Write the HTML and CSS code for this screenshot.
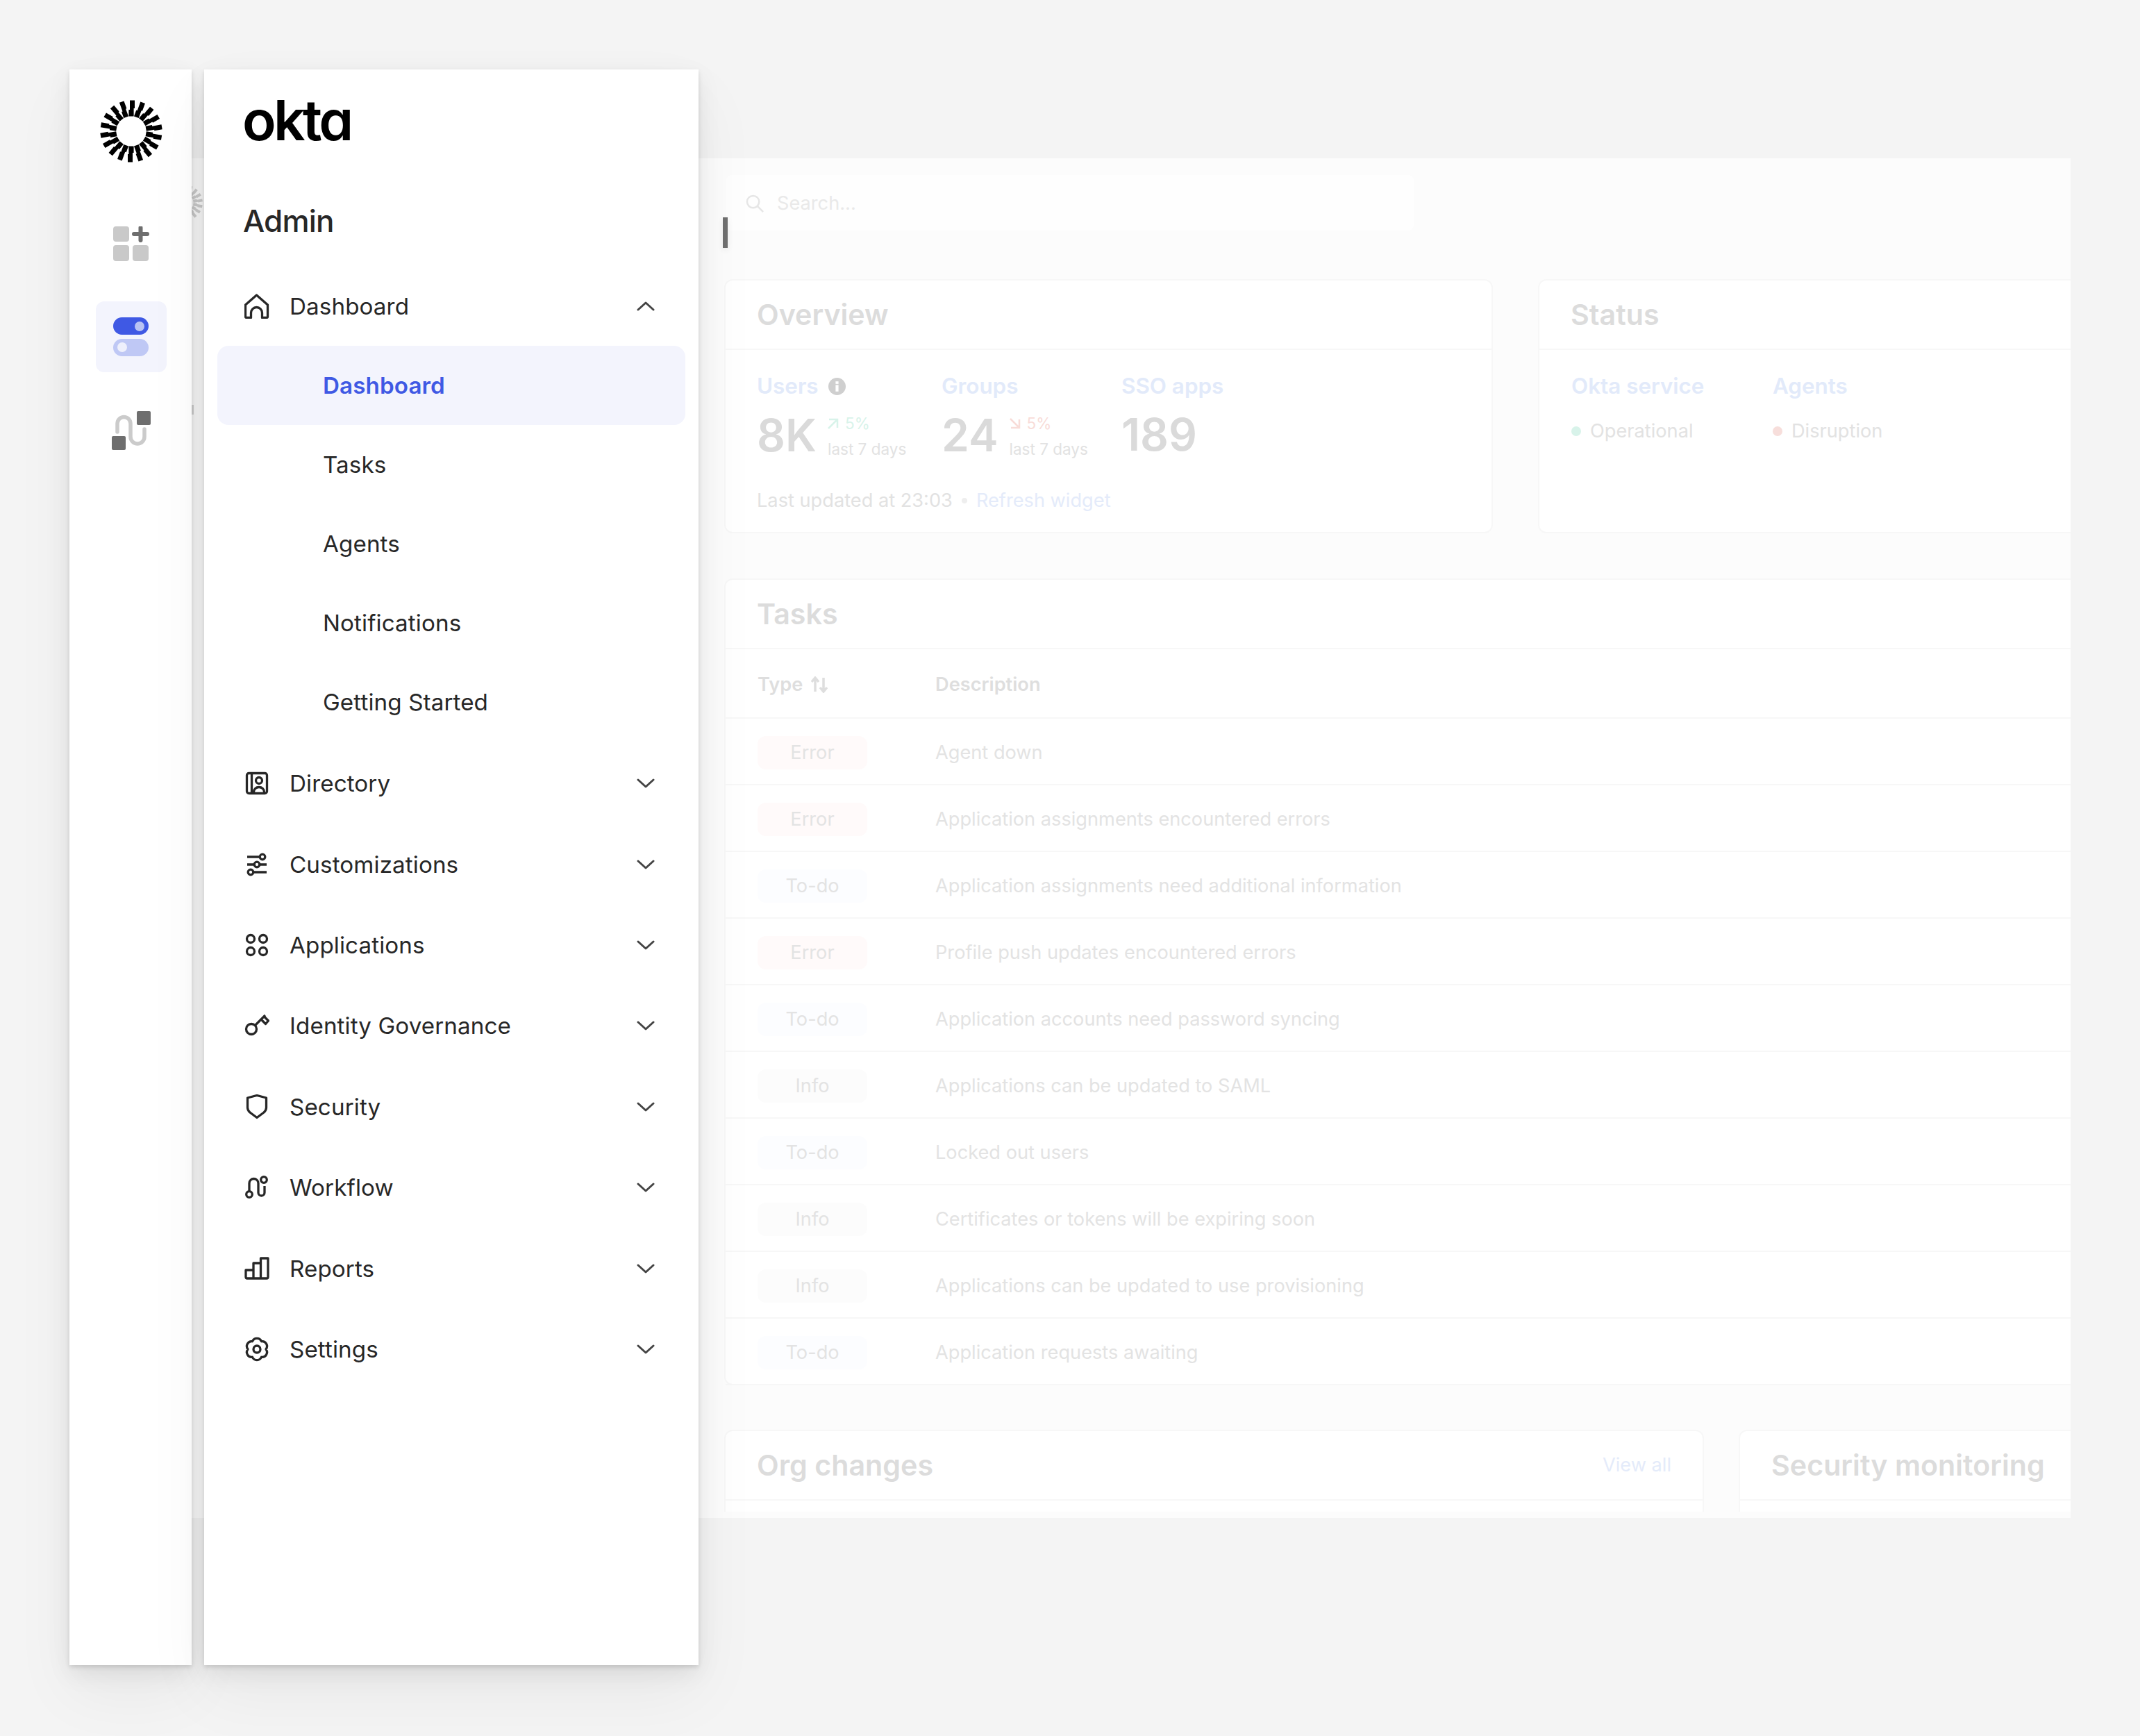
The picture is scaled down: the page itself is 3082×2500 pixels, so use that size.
FILE: index.html
```html
<!DOCTYPE html>
<html lang="en">
<head>
<meta charset="utf-8">
<title>Okta Admin</title>
<link rel="stylesheet" href="styles.css">
</head>
<body>
<svg class="defs" width="0" height="0" aria-hidden="true">
  <defs>
    <polygon id="ray" points="-2,-44.5 5,-44.5 5,-33 3.6,-33 3.6,-21.5 -3.6,-21.5 -3.6,-31 -2,-31"/>
    <g id="sun">
      <use href="#ray" transform="rotate(0)"/><use href="#ray" transform="rotate(20)"/><use href="#ray" transform="rotate(40)"/>
      <use href="#ray" transform="rotate(60)"/><use href="#ray" transform="rotate(80)"/><use href="#ray" transform="rotate(100)"/>
      <use href="#ray" transform="rotate(120)"/><use href="#ray" transform="rotate(140)"/><use href="#ray" transform="rotate(160)"/>
      <use href="#ray" transform="rotate(180)"/><use href="#ray" transform="rotate(200)"/><use href="#ray" transform="rotate(220)"/>
      <use href="#ray" transform="rotate(240)"/><use href="#ray" transform="rotate(260)"/><use href="#ray" transform="rotate(280)"/>
      <use href="#ray" transform="rotate(300)"/><use href="#ray" transform="rotate(320)"/><use href="#ray" transform="rotate(340)"/>
    </g>
  </defs>
</svg>

<div class="stage">
  <div class="window">
    <svg class="ghost-logo" viewBox="-50 -50 100 100"><use href="#sun"/></svg>
    <span class="ghost-tick"></span>
    <span class="ghost-bar"></span>
    <main class="content">
      <div class="search">
        <svg class="search-icon" viewBox="0 0 28 28"><circle cx="11" cy="11" r="9"/><path d="M17.5 17.5 26 26"/></svg>
        <span>Search...</span>
      </div>

      <div class="row row-top">
        <section class="card card-overview">
          <h2 class="card-head">Overview</h2>
          <div class="stats">
            <div class="stat">
              <div class="label">Users <svg class="info" viewBox="0 0 24 24"><circle cx="12" cy="12" r="12" fill="#cfcfcf"/><rect x="10" y="10" width="4" height="9" fill="#fff"/><rect x="10" y="5" width="4" height="3.5" fill="#fff"/></svg></div>
              <div class="value-row">
                <span class="value">8K</span>
                <div class="delta">
                  <span class="delta-up"><svg viewBox="0 0 16 16"><path d="M2 2h12v12M14 2 1 15"/></svg>5%</span>
                  <span class="delta-note">last 7 days</span>
                </div>
              </div>
            </div>
            <div class="stat">
              <div class="label">Groups</div>
              <div class="value-row">
                <span class="value">24</span>
                <div class="delta">
                  <span class="delta-down"><svg viewBox="0 0 16 16"><path d="M14 2v12H2M14 14 1 1"/></svg>5%</span>
                  <span class="delta-note">last 7 days</span>
                </div>
              </div>
            </div>
            <div class="stat">
              <div class="label">SSO apps</div>
              <div class="value-row"><span class="value value-plain">189</span></div>
            </div>
          </div>
          <p class="updated">Last updated at 23:03<i class="sep"></i><span class="link">Refresh widget</span></p>
        </section>

        <section class="card card-status">
          <h2 class="card-head">Status</h2>
          <div class="status-grid">
            <div>
              <div class="label">Okta service</div>
              <div class="state"><i class="dot dot-ok"></i>Operational</div>
            </div>
            <div>
              <div class="label">Agents</div>
              <div class="state"><i class="dot dot-bad"></i>Disruption</div>
            </div>
          </div>
        </section>
      </div>

      <section class="card card-tasks">
        <h2 class="card-head">Tasks</h2>
        <div class="tr th">
          <div class="col-type">Type <svg class="sort" viewBox="0 0 24 24"><path d="M6 22V4M1 8l5-6 5 6M18 2v18M13 16l5 6 5-6"/></svg></div>
          <div>Description</div>
        </div>
        <div class="tr"><div class="col-type"><span class="badge badge-error">Error</span></div><div>Agent down</div></div>
        <div class="tr"><div class="col-type"><span class="badge badge-error">Error</span></div><div>Application assignments encountered errors</div></div>
        <div class="tr"><div class="col-type"><span class="badge badge-todo">To-do</span></div><div>Application assignments need additional information</div></div>
        <div class="tr"><div class="col-type"><span class="badge badge-error">Error</span></div><div>Profile push updates encountered errors</div></div>
        <div class="tr"><div class="col-type"><span class="badge badge-todo">To-do</span></div><div>Application accounts need password syncing</div></div>
        <div class="tr"><div class="col-type"><span class="badge badge-info">Info</span></div><div>Applications can be updated to SAML</div></div>
        <div class="tr"><div class="col-type"><span class="badge badge-todo">To-do</span></div><div>Locked out users</div></div>
        <div class="tr"><div class="col-type"><span class="badge badge-info">Info</span></div><div>Certificates or tokens will be expiring soon</div></div>
        <div class="tr"><div class="col-type"><span class="badge badge-info">Info</span></div><div>Applications can be updated to use provisioning</div></div>
        <div class="tr"><div class="col-type"><span class="badge badge-todo">To-do</span></div><div>Application requests awaiting</div></div>
      </section>

      <div class="row row-bottom">
        <section class="card card-org">
          <div class="card-head card-head-split"><h2>Org changes</h2><span class="link">View all</span></div>
        </section>
        <section class="card card-security">
          <div class="card-head"><h2>Security monitoring</h2></div>
        </section>
      </div>
    </main>
  </div>

  <aside class="rail">
    <svg class="rail-logo" viewBox="-45 -45 90 90"><use href="#sun"/></svg>
    <svg class="rail-grid" viewBox="0 0 52 50">
      <rect width="23" height="22" rx="4" fill="#c9c9c9"/>
      <rect y="27" width="23" height="23" rx="4" fill="#c9c9c9"/>
      <rect x="28" y="27" width="23" height="23" rx="4" fill="#c9c9c9"/>
      <path d="M39.5 2v18M30 11h19" fill="none" stroke="#6e6e6e" stroke-width="6" stroke-linecap="round"/>
    </svg>
    <div class="rail-tile">
      <svg viewBox="0 0 51 56" width="51" height="56">
        <rect width="51" height="25" rx="12.5" fill="#3f59e4"/>
        <circle cx="38" cy="13" r="7" fill="#b9c3f3"/>
        <rect y="31" width="51" height="25" rx="12.5" fill="#bfc8f5"/>
        <circle cx="13" cy="43" r="7" fill="#eef0fc"/>
      </svg>
    </div>
    <svg class="rail-flow" viewBox="0 0 56 56">
      <path d="M8 30V18a9.5 9.5 0 0 1 19 0v19a10 10 0 0 0 20 0V26" fill="none" stroke="#cbcbcb" stroke-width="5.5" stroke-linecap="round"/>
      <rect x="36" width="20" height="20" rx="2" fill="#6e6e6e"/>
      <rect y="36" width="20" height="20" rx="2" fill="#6e6e6e"/>
    </svg>
  </aside>

  <aside class="panel">
    <div class="wordmark">okta</div>
    <div class="panel-title">Admin</div>
    <nav class="nav">
      <a class="nav-item nav-head">
        <svg class="nav-icon" viewBox="0 0 36 36"><path d="M9.5 34.5H3A1.5 1.5 0 0 1 1.5 33V16L17.5 2l16 14v17a1.5 1.5 0 0 1-1.5 1.5h-6.5v-7a8 8 0 0 0-16 0z"/></svg>
        <span>Dashboard</span>
        <svg class="chev" viewBox="0 0 26 14"><path d="M2 12 13 2l11 10"/></svg>
      </a>
      <a class="nav-sub nav-sub-active">Dashboard</a>
      <a class="nav-sub">Tasks</a>
      <a class="nav-sub">Agents</a>
      <a class="nav-sub">Notifications</a>
      <a class="nav-sub nav-sub-last">Getting Started</a>

      <a class="nav-item">
        <svg class="nav-icon" viewBox="0 0 36 36"><rect x="3.5" y="3.5" width="29" height="29" rx="3"/><path d="M10.5 3.5v29M13.5 32.5v-2a7.5 7 0 0 1 15 0v2"/><circle cx="21" cy="14" r="4.5"/></svg>
        <span>Directory</span>
        <svg class="chev" viewBox="0 0 26 14"><path d="M2 2l11 10L24 2"/></svg>
      </a>
      <a class="nav-item">
        <svg class="nav-icon" viewBox="0 0 36 36"><path d="M4 7h19M4 18h10M22 18h10M14 29h18"/><circle cx="26" cy="7" r="3.8"/><circle cx="18" cy="18" r="3.8"/><circle cx="9" cy="29" r="3.8"/></svg>
        <span>Customizations</span>
        <svg class="chev" viewBox="0 0 26 14"><path d="M2 2l11 10L24 2"/></svg>
      </a>
      <a class="nav-item">
        <svg class="nav-icon" viewBox="0 0 36 36"><circle cx="9" cy="9" r="5.5"/><circle cx="27" cy="9" r="5.5"/><circle cx="9" cy="27" r="5.5"/><circle cx="27" cy="27" r="5.5"/></svg>
        <span>Applications</span>
        <svg class="chev" viewBox="0 0 26 14"><path d="M2 2l11 10L24 2"/></svg>
      </a>
      <a class="nav-item">
        <svg class="nav-icon" viewBox="0 0 36 36"><circle cx="10" cy="23" r="7.5"/><path d="M15.5 17.5 30 3M24 9l6.500 6.500 4-4.500-6-6"/></svg>
        <span>Identity Governance</span>
        <svg class="chev" viewBox="0 0 26 14"><path d="M2 2l11 10L24 2"/></svg>
      </a>
      <a class="nav-item">
        <svg class="nav-icon" viewBox="0 0 36 36"><path d="M18 1.500 31.500 5v14q0 4-3.500 7L18 33.500 8 26q-3.500-3-3.500-7V5z"/></svg>
        <span>Security</span>
        <svg class="chev" viewBox="0 0 26 14"><path d="M2 2l11 10L24 2"/></svg>
      </a>
      <a class="nav-item">
        <svg class="nav-icon" viewBox="0 0 36 36"><path d="M7 23V12a6.500 6.500 0 0 1 13 0v13.500a4.500 4.500 0 0 0 9 0V16"/><circle cx="28" cy="7" r="4.300"/><circle cx="7" cy="28" r="4.300"/></svg>
        <span>Workflow</span>
        <svg class="chev" viewBox="0 0 26 14"><path d="M2 2l11 10L24 2"/></svg>
      </a>
      <a class="nav-item">
        <svg class="nav-icon" viewBox="0 0 36 36"><path d="M13 32H4a2 2 0 0 1-2-2V20h11V10h10.500V3H34v27a2 2 0 0 1-2 2zM13 20v12M23.500 10v22"/></svg>
        <span>Reports</span>
        <svg class="chev" viewBox="0 0 26 14"><path d="M2 2l11 10L24 2"/></svg>
      </a>
      <a class="nav-item">
        <svg class="nav-icon" viewBox="0 0 36 36"><path d="M11.500 6.740A7 7 0 0 1 24.500 6.740 7 7 0 0 1 31 18 7 7 0 0 1 24.500 29.260 7 7 0 0 1 11.500 29.260 7 7 0 0 1 5 18 7 7 0 0 1 11.500 6.740z"/><circle cx="18" cy="18" r="5"/></svg>
        <span>Settings</span>
        <svg class="chev" viewBox="0 0 26 14"><path d="M2 2l11 10L24 2"/></svg>
      </a>
    </nav>
  </aside>
</div>
</body>
</html>
```

FILE: styles.css
```css
* { box-sizing: border-box; }
html, body { margin: 0; padding: 0; }
body {
  width: 3082px;
  height: 2500px;
  overflow: hidden;
  background: #f4f4f4;
  font-family: "Inter", "Liberation Sans", sans-serif;
  color: #272727;
}
h2, p { margin: 0; font: inherit; }
.defs { position: absolute; }

.stage { position: relative; width: 3082px; height: 2500px; padding: 228px 0 0 100px; }

/* Faded app window behind the panels */
.window {
  position: relative;
  width: 2882px;
  height: 1958px;
  padding-left: 943px;
  background: #fcfcfc;
}
.ghost-logo { position: absolute; left: 137px; top: 35px; width: 58px; height: 58px; fill: #cfcfcf; }
.ghost-tick { position: absolute; left: 176px; top: 355px; width: 3px; height: 14px; background: #d6d6d6; }
.ghost-bar {
  position: absolute;
  left: 941px;
  top: 85px;
  width: 7px;
  height: 44px;
  background: #6e6e6e;
  box-shadow: 0 3px 8px rgba(0,0,0,.08);
  z-index: 2;
}
.content {
  height: 1949px;
  overflow: hidden;
  padding-top: 24px;
  font-size: 27.200px;
  line-height: 40px;
  color: #e3e3e3;
}
.search {
  display: flex;
  align-items: center;
  gap: 18px;
  width: 990px;
  height: 80px;
  margin-left: 3px;
  padding: 2px 0 0 28px;
  background: #fefefe;
  border-radius: 8px;
  color: #e9e9e9;
}
.search-icon { width: 27px; height: 27px; fill: none; stroke: #e6e6e6; stroke-width: 2.600; }

.row { display: flex; width: 2600px; }
.row-top { gap: 65px; margin-top: 70px; }
.row-bottom { gap: 50px; margin-top: 64px; }

.card {
  flex: none;
  background: #fff;
  border: 2px solid #f7f7f7;
  border-radius: 12px;
}
.card-overview, .card-status { width: 1107px; height: 366px; }
.card-tasks { width: 2400px; height: 1162px; margin-top: 65px; }
.card-org { width: 1411px; height: 200px; }
.card-security { width: 1000px; height: 200px; }

.card-head {
  height: 100px;
  padding: 0 45px;
  display: flex;
  align-items: center;
  border-bottom: 2px solid #f7f7f7;
  font-size: 41.200px;
  font-weight: 600;
  color: #dcdcdc;
}
.card-head-split { justify-content: space-between; }
.link { color: #e4ebfa; font-size: 27.200px; font-weight: 400; }

.label { display: flex; align-items: center; gap: 14px; font-size: 31.400px; font-weight: 600; color: #e2eafa; }
.info { width: 25px; height: 25px; }

.stats { display: grid; grid-template-columns: 266px 259px auto; padding: 32px 45px 0; }
.value-row { display: flex; align-items: center; gap: 16px; height: 72px; margin-top: 15px; }
.value { font-size: 64px; line-height: 72px; font-weight: 600; color: #dadada; }
.value-plain { position: relative; top: -1px; }
.delta { display: flex; flex-direction: column; font-size: 22.500px; line-height: 37px; margin-top: 2px; }
.delta-up, .delta-down { display: flex; align-items: center; gap: 9px; }
.delta-up { color: #d8f3ea; }
.delta-down { color: #f8dcd8; }
.delta svg { width: 16px; height: 16px; fill: none; stroke: currentColor; stroke-width: 2.500; }
.delta-note { color: #e2e2e2; }
.updated { display: flex; align-items: center; padding: 0 45px; margin-top: 38px; color: #e2e2e2; }
.sep { width: 8px; height: 8px; margin: 0 13px; border-radius: 50%; background: #eee; }

.status-grid { display: grid; grid-template-columns: 290px 290px; padding: 32px 46px 0; }
.state { display: flex; align-items: center; gap: 13px; margin-top: 25px; color: #e2e2e2; }
.dot { width: 14px; height: 14px; border-radius: 50%; }
.dot-ok { background: #d8f3ea; }
.dot-bad { background: #f7dedb; }

.tr {
  display: flex;
  align-items: center;
  height: 96px;
  padding: 4px 0 0 46px;
  border-bottom: 2px solid #f7f7f7;
  color: #e3e3e3;
}
.th { height: 100px; padding-top: 3px; font-weight: 600; color: #dedede; }
.col-type { flex: none; width: 256px; display: flex; align-items: center; gap: 12px; }
.sort { width: 24px; height: 24px; fill: none; stroke: #dedede; stroke-width: 3.500; }
.badge { width: 158px; height: 48px; display: flex; align-items: center; justify-content: center; border-radius: 12px; }
.badge-error { background: #fffafa; }
.badge-todo { background: #fcfdff; }
.badge-info { background: #fcfcfc; }

/* Foreground panels */
.rail, .panel {
  position: absolute;
  top: 100px;
  height: 2298px;
  background: #fff;
  box-shadow: 0 3px 6px rgba(0,0,0,.13), 0 12px 32px rgba(0,0,0,.08), 0 40px 90px rgba(0,0,0,.05);
}
.rail {
  left: 100px;
  width: 176px;
  display: flex;
  flex-direction: column;
  align-items: center;
  padding: 44px 0 0 1px;
}
.rail-logo { width: 90px; height: 90px; fill: #000; }
.rail-grid { width: 52px; height: 50px; margin-top: 92px; }
.rail-tile {
  width: 102px;
  height: 102px;
  margin-top: 58px;
  display: flex;
  align-items: center;
  justify-content: center;
  background: #f3f4fd;
  border-radius: 12px;
}
.rail-flow { width: 56px; height: 56px; margin-top: 56px; }

.panel { left: 294px; width: 712px; }
.wordmark {
  height: 80px;
  margin: 33px 0 0 55px;
  font-size: 80px;
  line-height: 80px;
  font-weight: 600;
  letter-spacing: -3.800px;
  color: #000;
  font-feature-settings: "cv11";
}
.panel-title { margin: 75px 0 0 56px; height: 60px; font-size: 44px; line-height: 60px; font-weight: 500; letter-spacing: -.8px; }

.nav { display: flex; flex-direction: column; margin-top: 36px; font-size: 33.200px; letter-spacing: .1px; }
.nav-item {
  display: flex;
  align-items: center;
  height: 116.400px;
  padding-left: 58px;
}
.nav-head { height: 114px; }
.nav-icon {
  flex: none;
  width: 36px;
  height: 36px;
  margin-right: 29px;
  fill: none;
  stroke: #272727;
  stroke-width: 3.300;
  stroke-linejoin: round;
}
.chev { width: 26px; height: 14px; margin-left: auto; margin-right: 63px; fill: none; stroke: #444; stroke-width: 3; stroke-linecap: round; stroke-linejoin: round; }
.nav-sub { display: flex; align-items: center; height: 114px; padding-left: 171px; }
.nav-sub-last { margin-bottom: 2px; }
.nav-sub-active {
  width: 674px;
  margin-left: 19px;
  padding-left: 152px;
  background: #f3f4fd;
  border-radius: 16px;
  color: #3f59e4;
  font-weight: 600;
}
```
